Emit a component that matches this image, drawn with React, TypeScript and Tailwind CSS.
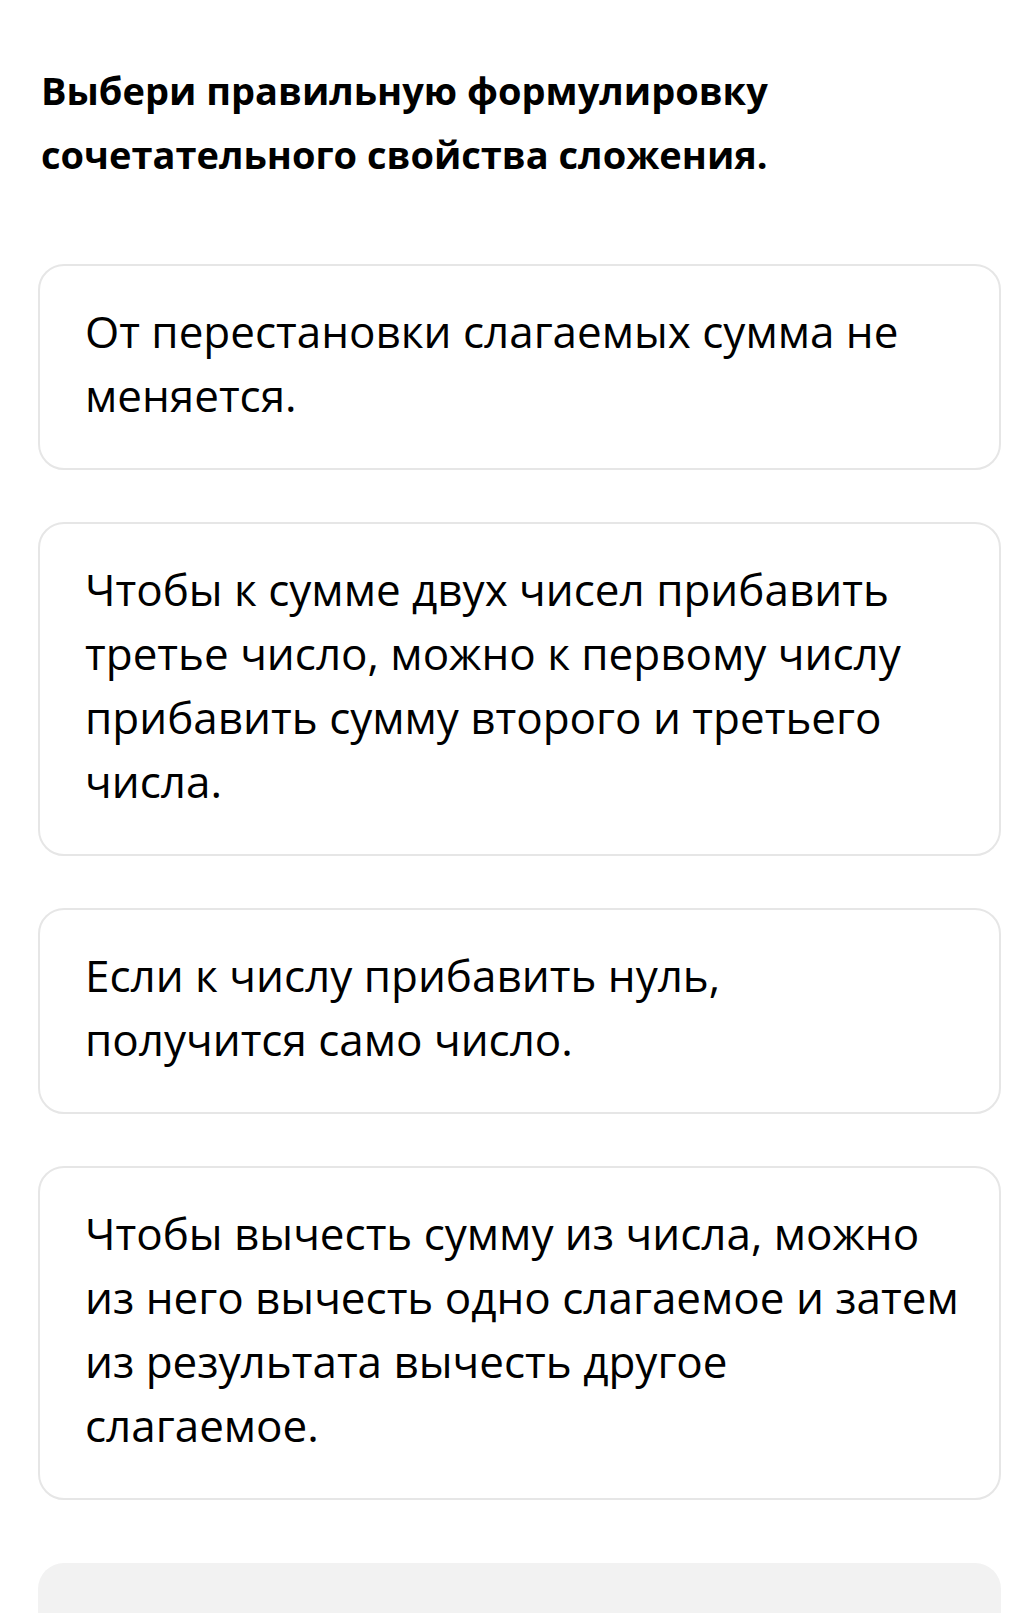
import React from "react";

const options: string[][] = [
  ["От перестановки слагаемых сумма не", "меняется."],
  [
    "Чтобы к сумме двух чисел прибавить",
    "третье число, можно к первому числу",
    "прибавить сумму второго и третьего",
    "числа.",
  ],
  ["Если к числу прибавить нуль,", "получится само число."],
  [
    "Чтобы вычесть сумму из числа, можно",
    "из него вычесть одно слагаемое и затем",
    "из результата вычесть другое",
    "слагаемое.",
  ],
];

function Option({ lines }: { lines: string[] }) {
  return (
    <button
      type="button"
      className="block w-full text-left rounded-[26px] border-2 border-[#e6e6e6] bg-white px-[45px] pt-[33px] pb-[41px] text-[44px] leading-[64px] text-black"
    >
      {lines.map((l, i) => (
        <span key={i} className="block whitespace-nowrap">
          {l}
        </span>
      ))}
    </button>
  );
}

export default function App() {
  return (
    <div
      className="min-h-[1613px] bg-white pl-[38px] pr-[22px] pt-[58px]"
      style={{ fontFamily: '"Open Sans", "Noto Sans", sans-serif' }}
    >
      <h1 className="pl-[3px] text-[38px] font-bold leading-[64px] text-black">
        Выбери правильную формулировку
        <br />
        сочетательного свойства сложения.
      </h1>
      <div className="mt-[78px] flex flex-col gap-[52px]">
        {options.map((o, i) => (
          <Option key={i} lines={o} />
        ))}
        <div className="mt-[11px] h-[120px] rounded-t-[26px] bg-[#f2f2f2]" />
      </div>
    </div>
  );
}
